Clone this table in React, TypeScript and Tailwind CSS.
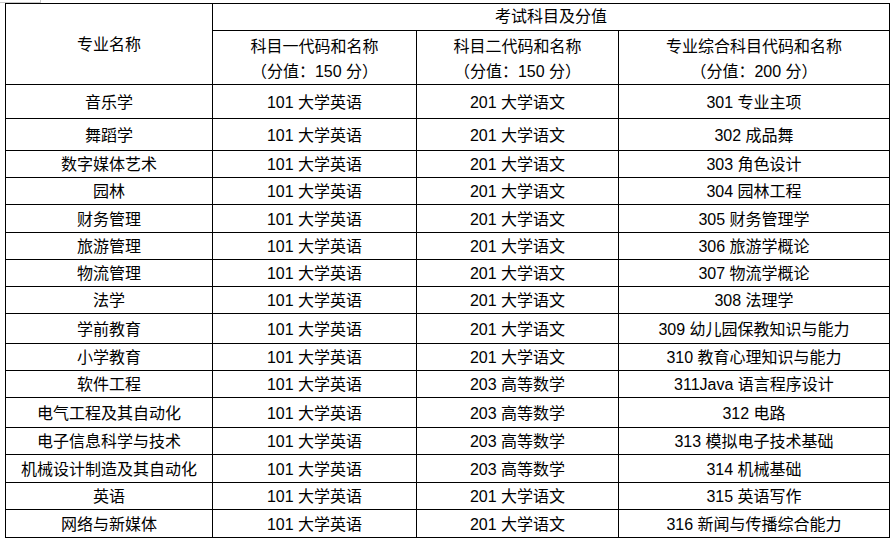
const rows: { name: string; s1: string; s2: string; s3: string; h: string }[] = [
  { name: "音乐学", s1: "101 大学英语", s2: "201 大学语文", s3: "301 专业主项", h: "h-[34px]" },
  { name: "舞蹈学", s1: "101 大学英语", s2: "201 大学语文", s3: "302 成品舞", h: "h-[32px]" },
  { name: "数字媒体艺术", s1: "101 大学英语", s2: "201 大学语文", s3: "303 角色设计", h: "h-[27px]" },
  { name: "园林", s1: "101 大学英语", s2: "201 大学语文", s3: "304 园林工程", h: "h-[27px]" },
  { name: "财务管理", s1: "101 大学英语", s2: "201 大学语文", s3: "305 财务管理学", h: "h-[28px]" },
  { name: "旅游管理", s1: "101 大学英语", s2: "201 大学语文", s3: "306 旅游学概论", h: "h-[27px]" },
  { name: "物流管理", s1: "101 大学英语", s2: "201 大学语文", s3: "307 物流学概论", h: "h-[27px]" },
  { name: "法学", s1: "101 大学英语", s2: "201 大学语文", s3: "308 法理学", h: "h-[27px]" },
  { name: "学前教育", s1: "101 大学英语", s2: "201 大学语文", s3: "309 幼儿园保教知识与能力", h: "h-[30px]" },
  { name: "小学教育", s1: "101 大学英语", s2: "201 大学语文", s3: "310 教育心理知识与能力", h: "h-[27px]" },
  { name: "软件工程", s1: "101 大学英语", s2: "203 高等数学", s3: "311Java 语言程序设计", h: "h-[27px]" },
  { name: "电气工程及其自动化", s1: "101 大学英语", s2: "203 高等数学", s3: "312 电路", h: "h-[30px]" },
  { name: "电子信息科学与技术", s1: "101 大学英语", s2: "203 高等数学", s3: "313 模拟电子技术基础", h: "h-[27px]" },
  { name: "机械设计制造及其自动化", s1: "101 大学英语", s2: "203 高等数学", s3: "314 机械基础", h: "h-[28px]" },
  { name: "英语", s1: "101 大学英语", s2: "201 大学语文", s3: "315 英语写作", h: "h-[27px]" },
  { name: "网络与新媒体", s1: "101 大学英语", s2: "201 大学语文", s3: "316 新闻与传播综合能力", h: "h-[28px]" },
];

const cell = "border border-black text-center align-middle p-0";

export default function App() {
  return (
    <div className="min-h-screen w-[893px] h-[550px] bg-white text-black text-[16px] leading-[20px] font-['Liberation_Sans','Noto_Sans_CJK_SC',sans-serif]">
      <div className="h-[3px] w-[41px] border-r border-b border-[#c8c8c8]" />
      <table className="ml-[5px] w-[884px] table-fixed border-collapse">
        <colgroup>
          <col className="w-[207px]" />
          <col className="w-[204px]" />
          <col className="w-[202px]" />
          <col className="w-[271px]" />
        </colgroup>
        <thead>
          <tr className="h-[27px]">
            <th rowSpan={2} className={`${cell} font-normal pt-[2px]`}>
              专业名称
            </th>
            <th colSpan={3} className={`${cell} font-normal`}>
              考试科目及分值
            </th>
          </tr>
          <tr className="h-[53px]">
            <th className={`${cell} font-normal leading-[25px] pt-[3px]`}>
              科目一代码和名称
              <br />
              （分值：150 分）
            </th>
            <th className={`${cell} font-normal leading-[25px] pt-[3px]`}>
              科目二代码和名称
              <br />
              （分值：150 分）
            </th>
            <th className={`${cell} font-normal leading-[25px] pt-[3px]`}>
              专业综合科目代码和名称
              <br />
              （分值：200 分）
            </th>
          </tr>
        </thead>
        <tbody>
          {rows.map((r) => (
            <tr key={r.name} className={r.h}>
              <td className={`${cell} pt-[2px]`}>{r.name}</td>
              <td className={`${cell} pt-[2px]`}>{r.s1}</td>
              <td className={`${cell} pt-[2px]`}>{r.s2}</td>
              <td className={`${cell} pt-[2px]`}>{r.s3}</td>
            </tr>
          ))}
        </tbody>
      </table>
    </div>
  );
}
